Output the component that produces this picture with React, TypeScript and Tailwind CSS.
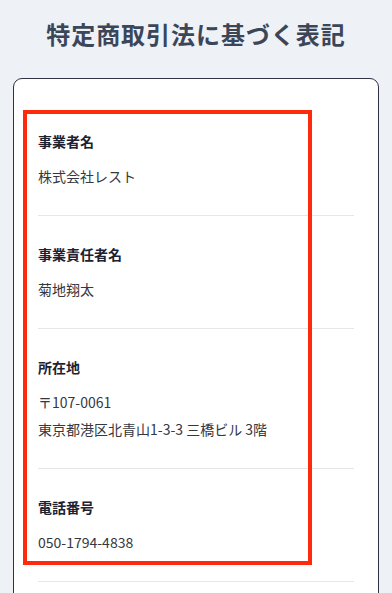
import React from "react";

const items: { label: string; values: string[] }[] = [
  { label: "事業者名", values: ["株式会社レスト"] },
  { label: "事業責任者名", values: ["菊地翔太"] },
  { label: "所在地", values: ["〒107-0061", "東京都港区北青山1-3-3 三橋ビル 3階"] },
  { label: "電話番号", values: ["050-1794-4838"] },
];

export default function App() {
  return (
    <div
      className="relative w-[392px] h-[593px] overflow-hidden bg-[#eef2f7] px-[13px]"
      style={{ fontFamily: '"Noto Sans CJK JP", "Noto Sans", sans-serif' }}
    >
      <h1 className="pt-[18px] h-[78px] text-center text-[24px] leading-[32px] font-bold tracking-[0.04em] text-[#3b4658]">
        特定商取引法に基づく表記
      </h1>
      <div className="min-h-[560px] rounded-[9px] border border-[#2f3245] bg-white p-6">
        {items.map((it) => (
          <div key={it.label} className="border-b border-[#e5e7eb] pt-7 pb-[25px]">
            <div className="text-[14px] leading-5 font-bold text-[#1e2230]">{it.label}</div>
            <div className="mt-3">
              {it.values.map((v) => (
                <div key={v} className="text-[14px] leading-[27px] text-[#35383f]">
                  {v}
                </div>
              ))}
            </div>
          </div>
        ))}
      </div>
      <div className="absolute left-[23px] top-[110px] w-[289px] h-[455px] border-[4.5px] border-[#ff2a0c]" />
    </div>
  );
}
